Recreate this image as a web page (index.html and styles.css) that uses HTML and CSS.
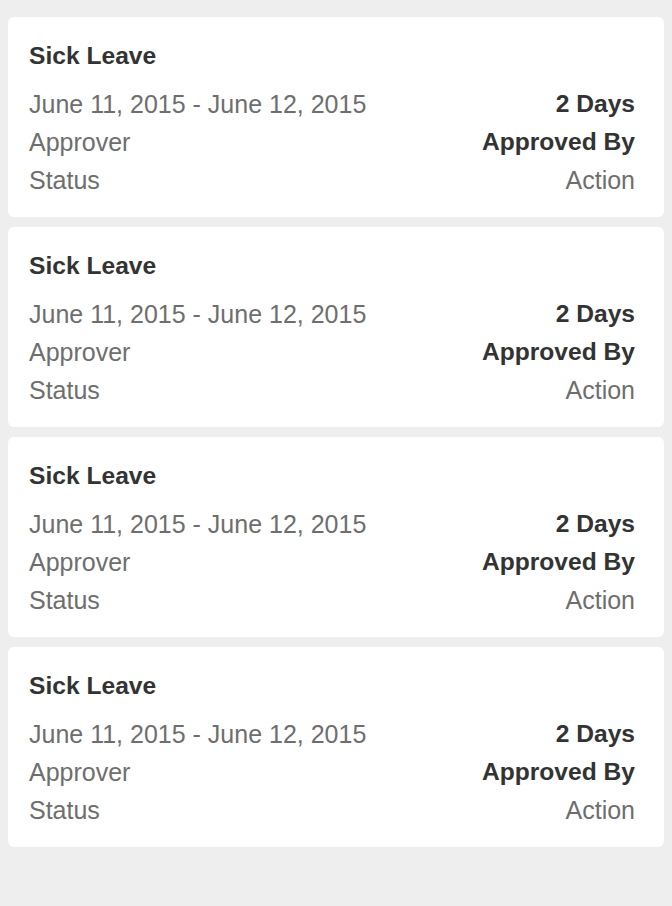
FILE: index.html
```html
<!DOCTYPE html>
<html>
<head>
<meta charset="utf-8">
<link rel="stylesheet" href="styles.css">
</head>
<body>
<div class="list">
  <div class="card">
    <div class="title">Sick Leave</div>
    <div class="row"><span class="muted">June 11, 2015 - June 12, 2015</span><span class="strong">2 Days</span></div>
    <div class="row"><span class="muted">Approver</span><span class="strong">Approved By</span></div>
    <div class="row"><span class="muted">Status</span><span class="muted">Action</span></div>
  </div>
  <div class="card">
    <div class="title">Sick Leave</div>
    <div class="row"><span class="muted">June 11, 2015 - June 12, 2015</span><span class="strong">2 Days</span></div>
    <div class="row"><span class="muted">Approver</span><span class="strong">Approved By</span></div>
    <div class="row"><span class="muted">Status</span><span class="muted">Action</span></div>
  </div>
  <div class="card">
    <div class="title">Sick Leave</div>
    <div class="row"><span class="muted">June 11, 2015 - June 12, 2015</span><span class="strong">2 Days</span></div>
    <div class="row"><span class="muted">Approver</span><span class="strong">Approved By</span></div>
    <div class="row"><span class="muted">Status</span><span class="muted">Action</span></div>
  </div>
  <div class="card">
    <div class="title">Sick Leave</div>
    <div class="row"><span class="muted">June 11, 2015 - June 12, 2015</span><span class="strong">2 Days</span></div>
    <div class="row"><span class="muted">Approver</span><span class="strong">Approved By</span></div>
    <div class="row"><span class="muted">Status</span><span class="muted">Action</span></div>
  </div>
</div>
</body>
</html>
```
FILE: styles.css
```css
html, body {
  margin: 0;
  padding: 0;
  background: #eeeeee;
}
body {
  font-family: "Liberation Sans", Arial, sans-serif;
  font-size: 24px;
  color: #333333;
}
.list {
  display: flex;
  flex-direction: column;
  gap: 10px;
  padding: 17px 8px 0 8px;
}
.card {
  background: #ffffff;
  border-radius: 6px;
  padding: 20px 29px 18px 21px;
  display: flex;
  flex-direction: column;
}
.title {
  font-weight: bold;
  font-size: 24.6px;
  height: 38px;
  line-height: 38px;
  margin-bottom: 10px;
  color: #333333;
}
.row {
  display: flex;
  justify-content: space-between;
  align-items: center;
  height: 38px;
}
.muted,
.strong {
  display: block;
  line-height: 38px;
}
.muted {
  font-size: 25px;
  color: #6e6e6e;
}
.strong {
  font-weight: bold;
  font-size: 24.6px;
  color: #333333;
}
```
